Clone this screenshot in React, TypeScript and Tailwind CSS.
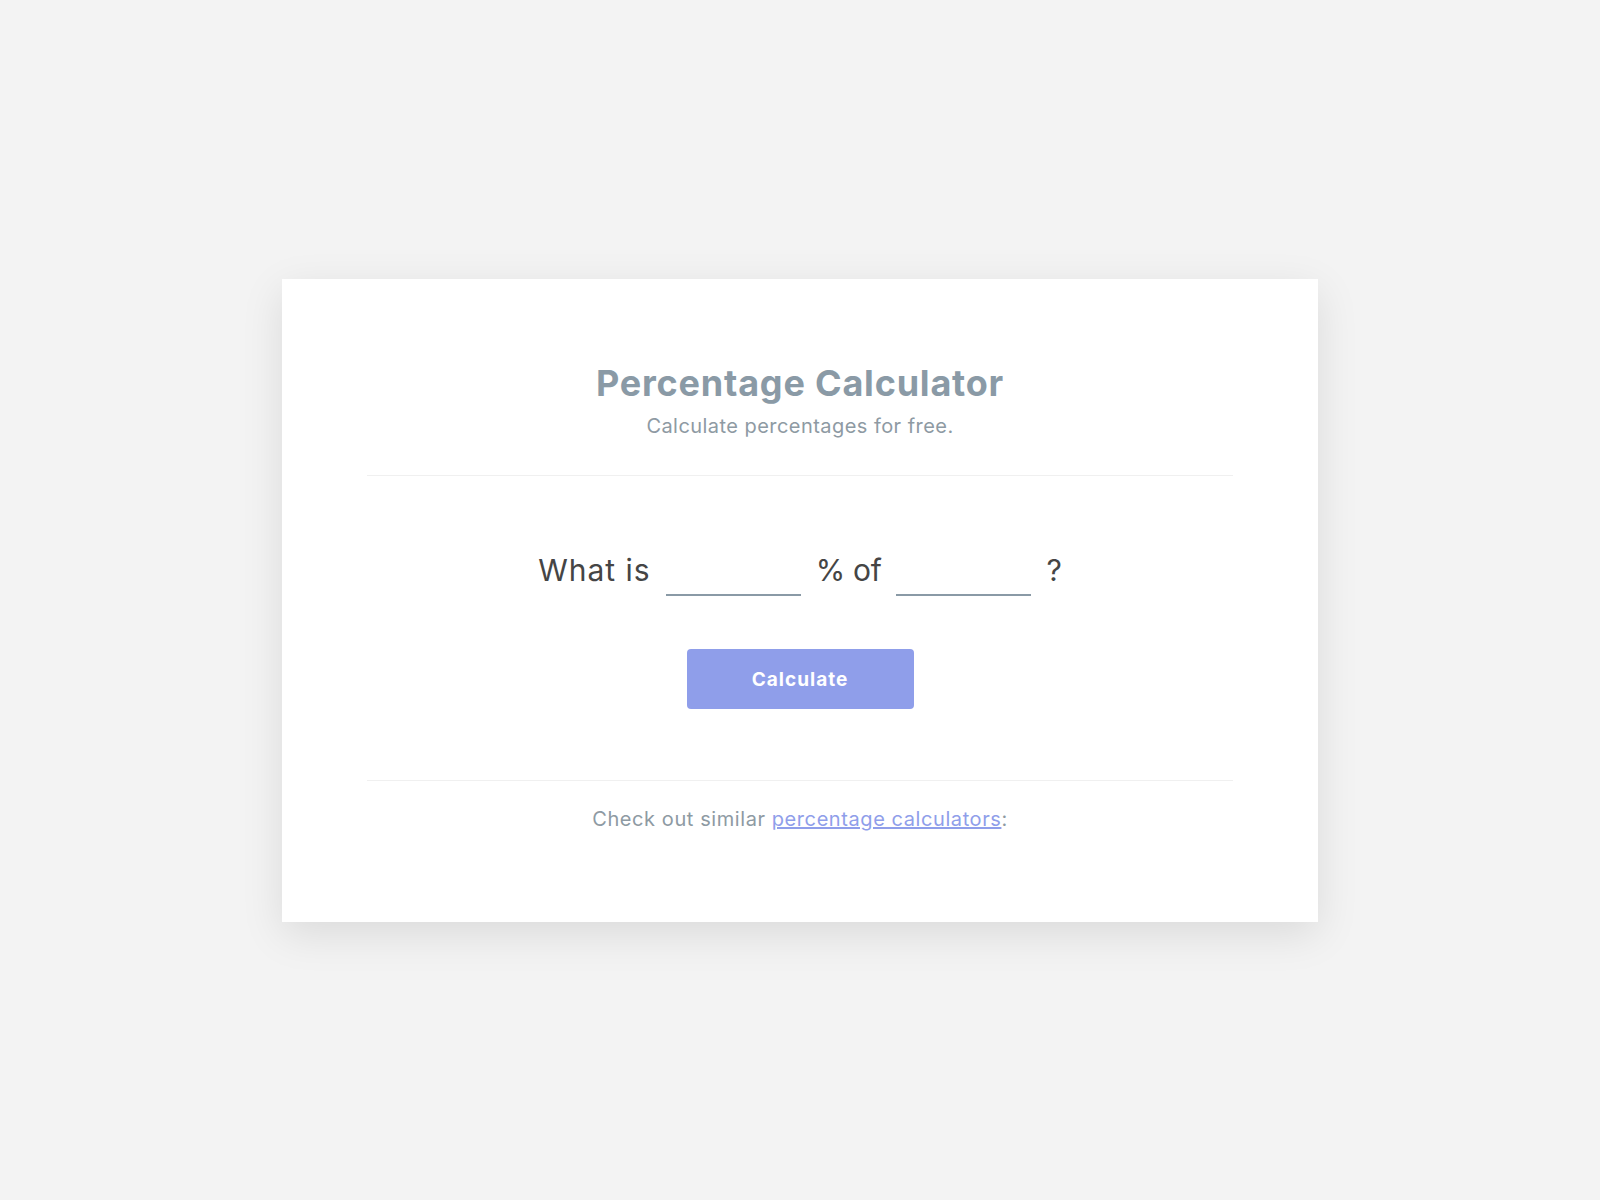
import { useState } from 'react'

export default function App() {
  const [pct, setPct] = useState('')
  const [base, setBase] = useState('')

  return (
    <div className="min-h-screen w-full bg-[#f3f3f3] flex items-center justify-center font-['Inter','Open_Sans',sans-serif]">
      {/* Card */}
      <div className="w-[1036px] bg-white px-[85px] pt-[82px] pb-[91px] shadow-[0_12px_40px_rgba(0,0,0,0.10)]">
        <h1 className="text-center text-[36px] leading-[44px] font-bold tracking-[0.8px] text-[#8a9aa6]">Percentage Calculator</h1>
        <p className="mt-[7px] text-center text-[20px] leading-[28px] tracking-[0.45px] text-[#8e9aa3]">Calculate percentages for free.</p>

        <div className="mt-[35px] h-px bg-[#f0f0f0]" />

        {/* Question row */}
        <div className="mt-[68px] flex items-center justify-center gap-[15px] text-[30px] leading-[40px] text-[#454545]">
          <span className="tracking-[1px]">What is</span>
          <input
            value={pct}
            onChange={e => setPct(e.target.value)}
            className="w-[135px] h-[52px] border-b-2 border-[#8a9aa6] bg-transparent text-center outline-none"
          />
          <span className="tracking-[-0.3px]">% of</span>
          <input
            value={base}
            onChange={e => setBase(e.target.value)}
            className="w-[135px] h-[52px] border-b-2 border-[#8a9aa6] bg-transparent text-center outline-none"
          />
          <span>?</span>
        </div>

        <div className="mt-[53px] flex justify-center">
          <button className="w-[227px] h-[60px] pt-[3px] rounded-[4px] bg-[#8f9eea] text-white text-[19px] font-bold tracking-[1px]">
            Calculate
          </button>
        </div>

        <div className="mt-[71px] h-px bg-[#f0f0f0]" />

        <p className="mt-[26px] text-center text-[20px] leading-[24px] tracking-[0.58px] text-[#8e9aa3]">
          Check out similar{' '}
          <a href="#" className="text-[#8f9eea] underline">percentage calculators</a>:
        </p>
      </div>
    </div>
  )
}
